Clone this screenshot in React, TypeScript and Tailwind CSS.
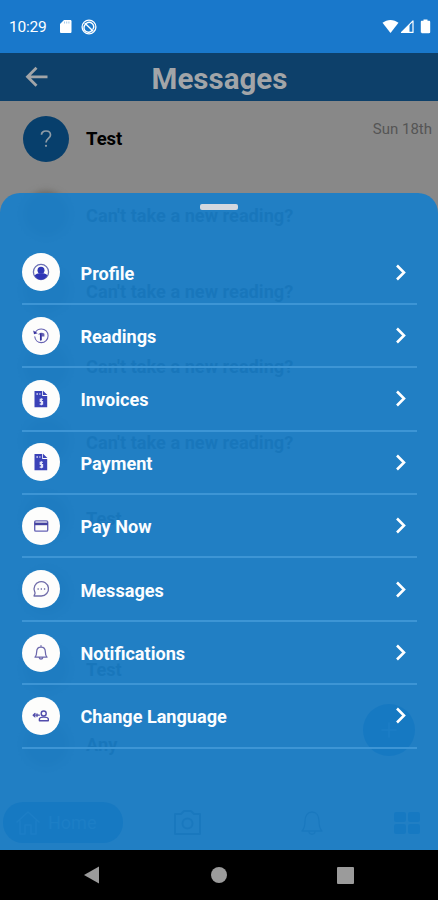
import type { ReactNode } from "react";

const stroke = { fill: "none", stroke: "currentColor", strokeLinecap: "round", strokeLinejoin: "round" } as const;

const InvoiceIcon = () => (
  <svg className="h-[18px] w-[18px]" viewBox="0 0 18 18">
    <path d="M2.500 1h7.700v5h5v11.200H2.500z M11 .8 15.400 5H11z" fill="#3b42b8" />
    <path d="M4.400 4h1.600M7.300 4h1.200" stroke="#d5d7f4" strokeWidth="1.300" />
    <path d="M11 9.200H8.200v2.300h2.400v2.600H7.700M9.400 8.200v7" fill="none" stroke="#e8e9fb" strokeWidth="1.100" />
  </svg>
);

const items: { label: string; icon: ReactNode }[] = [
  {
    label: "Profile",
    icon: (
      <svg className="h-[18px] w-[18px]" viewBox="0 0 18 18">
        <circle cx="9" cy="9" r="7.600" fill="none" stroke="#6b70b5" strokeWidth="1.300" />
        <circle cx="9" cy="7.200" r="3.500" fill="#2f35b5" />
        <path d="M2.500 12.500C4 10.700 6 10.400 7 10.200h4c2 .2 3.400.8 4.500 2.300C14 15.300 11.700 16.700 9 16.700s-5-1.400-6.500-4.200z" fill="#2f35b5" />
      </svg>
    ),
  },
  {
    label: "Readings",
    icon: (
      <svg className="h-[18px] w-[18px] text-[#6662b2]" viewBox="0 0 18 18">
        <path d="M3.300 5.600C4.500 3.200 6.600 2 9.300 2c4 0 6.800 3 6.800 6.700s-3 6.900-6.800 6.900c-3.600 0-6.200-2.600-6.500-5.800" {...stroke} strokeWidth="1.100" />
        <path d="M1.200 3.500 2 7.300l3.700-1.100z" fill="#39349f" />
        <path d="M6 7.500c1.600-2 4.500-2.400 6.400-.8v2.800H9.800V13H8.300V7.500z" fill="currentColor" />
        <path d="M8.700 6.400v7.200" stroke="#332f9b" strokeWidth="1.500" />
      </svg>
    ),
  },
  { label: "Invoices", icon: <InvoiceIcon /> },
  { label: "Payment", icon: <InvoiceIcon /> },
  {
    label: "Pay Now",
    icon: (
      <svg className="h-[18px] w-[18px] text-[#6663b5]" viewBox="0 0 18 18">
        <rect x="2.700" y="3.900" width="13" height="10.200" rx="1.200" {...stroke} strokeWidth="1.400" />
        <path d="M2.500 6.900h13.400" stroke="#4543a0" strokeWidth="2.600" />
      </svg>
    ),
  },
  {
    label: "Messages",
    icon: (
      <svg className="h-[18px] w-[18px] text-[#706ca9]" viewBox="0 0 18 18">
        <path d="M2 16h7.300a7.200 7.200 0 1 0-6.600-4.300c.3.800.5 1.300.300 1.900z" {...stroke} strokeWidth="1.300" />
        <path d="M5.500 9h1.300M8.700 9H10M11.900 9h1.300" stroke="currentColor" strokeWidth="1.600" />
      </svg>
    ),
  },
  {
    label: "Notifications",
    icon: (
      <svg className="h-[18px] w-[18px] text-[#6c68ac]" viewBox="0 0 18 18">
        <path d="M3 13.200c1.400-1.400 1.700-2.500 1.700-5.700 0-2.500 1.600-4.500 4.300-4.500s4.300 2 4.300 4.500c0 3.200.3 4.300 1.700 5.700zM7.200 13.700c.3 1.800 3.300 1.800 3.600 0M9 1.700V3" {...stroke} strokeWidth="1.250" />
      </svg>
    ),
  },
  {
    label: "Change Language",
    icon: (
      <svg className="h-[18px] w-[18px] text-[#524dab]" viewBox="0 0 18 18">
        <circle cx="11.700" cy="6.500" r="2.500" {...stroke} strokeWidth="1.400" />
        <path d="M7.400 13.700v-1.600c0-1.400 1.400-2 4.400-2s4.500.6 4.500 2v1.600z" {...stroke} strokeWidth="1.400" />
        <path d="M1.300 8.200h6M3 6.500 1.200 8.200 3 9.900M5 7v2.500" {...stroke} strokeWidth="1.300" />
      </svg>
    ),
  },
];

const threads = [
  "Test",
  "Can't take a new reading?",
  "Can't take a new reading?",
  "Can't take a new reading?",
  "Can't take a new reading?",
  "Test",
  "",
  "Test",
  "Any",
];

function StatusBar() {
  return (
    <div className="flex h-[53px] shrink-0 items-center justify-between bg-[#1978cb] pr-[7px] pl-[9px] text-white">
      <div className="flex items-center">
        <span className="w-[50px] pt-[2px] text-[15.500px] tracking-[-0.200px]">10:29</span>
        <svg className="h-[15px] w-[13px]" viewBox="0 0 13 15">
          <path d="M5 1h6.200c.8 0 1.300.5 1.300 1.300v10.400c0 .8-.5 1.300-1.300 1.300H2.300C1.500 14 1 13.500 1 12.700V5z" fill="currentColor" />
          <path d="M5.500 2.500v2M7.700 2.500v2M9.900 2.500v2" stroke="#1978cb" strokeWidth=".4" />
        </svg>
        <svg className="ml-[9px] h-4 w-4" viewBox="0 0 16 16">
          <circle cx="8" cy="8" r="6.900" {...stroke} strokeWidth="1.300" />
          <path d="M4.200 4.400 12 12M11 11.500A4.400 4.400 0 0 1 3.900 6M5.500 4.300A4.400 4.400 0 0 1 12 10" {...stroke} strokeWidth="1.400" />
        </svg>
      </div>
      <div className="flex items-center">
        <svg className="h-[15px] w-[17px]" viewBox="0 0 17 15">
          <path d="M.5 3.800C5-.1 12-.1 16.500 3.800L8.500 14z" fill="currentColor" />
        </svg>
        <svg className="ml-[1px] h-[15px] w-[15px]" viewBox="0 0 15 15">
          <path d="M1.500 13.400 13 1.900v11.500z" {...stroke} strokeWidth="1.200" />
          <path d="M1 13.900 9.500 5.400v8.500z" fill="currentColor" />
        </svg>
        <svg className="ml-[5px] h-[15px] w-[11px]" viewBox="0 0 11 15">
          <path d="M3.500.5h4v1.300H9c.8 0 1.200.4 1.200 1.200v10c0 .8-.4 1.200-1.200 1.200H2c-.8 0-1.200-.4-1.200-1.200V3c0-.8.400-1.200 1.200-1.200h1.500z" fill="currentColor" />
        </svg>
      </div>
    </div>
  );
}

function MessagesPage() {
  return (
    <div className="relative flex h-[797px] shrink-0 flex-col bg-[#888888]">
      <header className="grid h-[48px] shrink-0 grid-cols-[52px_1fr_52px] items-center bg-[#0d406a] text-[#a2a5a8]">
        <svg className="ml-[25px] h-[22px] w-6" viewBox="0 0 24 22">
          <path d="M22.500 10.800H3M11.500 1.800 2.500 10.800l9 9" fill="none" stroke="currentColor" strokeWidth="2.800" />
        </svg>
        <h1 className="pt-[3px] pl-px text-center text-[29.500px] leading-8 font-bold">Messages</h1>
      </header>
      <ul className="h-[696px] overflow-hidden">
        {threads.map((title, i) => (
          <li key={i} className="flex h-[75.600px] items-center pl-[23px]">
            <span
              className={
                i === 0
                  ? "flex size-[46px] items-center justify-center rounded-full bg-[#073f6c] text-[#8f9ca6]"
                  : "size-[46px] rounded-full bg-[#6b6964] blur-[3px]"
              }
            >
              {i === 0 && (
                <svg className="h-[18px] w-3" viewBox="0 0 12 18">
                  <path d="M1.500 4.800C1.500 2.500 3.300 1 6 1s4.500 1.600 4.500 3.900C10.500 8.200 6 8.500 6 12.500" fill="none" stroke="currentColor" strokeWidth="1.700" />
                  <circle cx="6" cy="15.800" r="1.100" fill="currentColor" />
                </svg>
              )}
            </span>
            <span
              className={
                i === 0
                  ? "ml-[17px] pt-[3px] text-[18.500px] font-bold text-black"
                  : "ml-[17px] pt-[3px] text-[18.200px] font-bold text-[#222222]"
              }
            >
              {title}
            </span>
            {i === 0 && <span className="mr-[6px] mb-[20px] ml-auto text-[15px] text-[#555555]">Sun 18th</span>}
          </li>
        ))}
      </ul>
      <nav className="flex h-[53px] shrink-0 items-center bg-[#888888] pb-[2px] pl-[3px] text-[#2c3a49]">
        <span className="flex h-[41px] w-[120px] items-center rounded-[20px] bg-[#003f78] pl-3 text-[#4c7a9c]">
          <svg className="h-[26px] w-[26px]" viewBox="0 0 26 26">
            <path d="M2 12 13 2l11 10M5 11v13h5v-9h6v9h5V11" {...stroke} strokeWidth="1.500" />
          </svg>
          <span className="ml-[7px] text-[18px]">Home</span>
        </span>
        <svg className="ml-[49px] h-7 w-[31px]" viewBox="0 0 31 28">
          <path d="M3 5h6l3-3h7l3 3h6v20H3z" {...stroke} strokeWidth="2" />
          <circle cx="15.500" cy="14.500" r="5" {...stroke} strokeWidth="2" />
        </svg>
        <svg className="ml-[98px] h-[28px] w-[22px]" viewBox="0 0 22 28">
          <path d="M1 22c2-2 3-4 3-10 0-5 2.500-9 7-9s7 4 7 9c0 6 1 8 3 10zM8 23c.5 3 5.500 3 6 0" {...stroke} strokeWidth="1.300" />
        </svg>
        <span className="ml-[71px] grid grid-cols-2 gap-[2px] text-[#003f78]">
          <i className="h-[10px] w-3 rounded-[2px] bg-current" />
          <i className="h-[10px] w-3 rounded-[2px] bg-current" />
          <i className="h-[10px] w-3 rounded-[2px] bg-current" />
          <i className="h-[10px] w-3 rounded-[2px] bg-current" />
        </span>
      </nav>
      <span className="absolute right-[23px] bottom-[94px] flex size-[52px] items-center justify-center rounded-full bg-[#003f78] text-[#4c7a9c]">
        <svg className="size-4" viewBox="0 0 16 16">
          <path d="M8 1v14M1 8h14" {...stroke} strokeWidth="1.500" />
        </svg>
      </span>
    </div>
  );
}

function MenuSheet() {
  return (
    <div className="absolute inset-x-0 top-[192.500px] bottom-[50px] rounded-t-[20px] bg-[#187ec9]/92 px-[22px] pt-[11px]">
      <div className="mx-auto h-[6px] w-[38px] rounded-[2px] bg-[#d3d8df]" />
      <ul className="pt-[32px]">
        {items.map(({ label, icon }) => (
          <li key={label} className="mr-[-1px] flex h-[63.400px] items-center border-b-2 border-[#3d95d5]">
            <span className="-ml-[0.500px] flex size-[38px] items-center justify-center rounded-full bg-[#fdfdfc]">{icon}</span>
            <span className="ml-[21px] pt-[2px] text-[18.100px] font-bold text-[#fbfdff]">{label}</span>
            <svg className="mr-[10px] ml-auto h-[17px] w-3" viewBox="0 0 12 17">
              <path d="m2 1.500 7 7-7 7" fill="none" stroke="#fff" strokeWidth="2.600" />
            </svg>
          </li>
        ))}
      </ul>
    </div>
  );
}

export default function App() {
  return (
    <div className="relative flex h-[900px] w-[438px] flex-col overflow-hidden bg-black font-[Roboto,sans-serif]">
      <StatusBar />
      <MessagesPage />
      <MenuSheet />
      <div className="flex h-[50px] items-center pl-[83px] text-[#9b9b9b]">
        <svg className="h-[18px] w-[17px]" viewBox="0 0 17 18">
          <path d="M1 9 16 .5v17z" fill="currentColor" />
        </svg>
        <span className="ml-[111px] size-4 rounded-full bg-current" />
        <span className="ml-[110px] size-[17px] rounded-[1px] bg-current" />
      </div>
    </div>
  );
}
